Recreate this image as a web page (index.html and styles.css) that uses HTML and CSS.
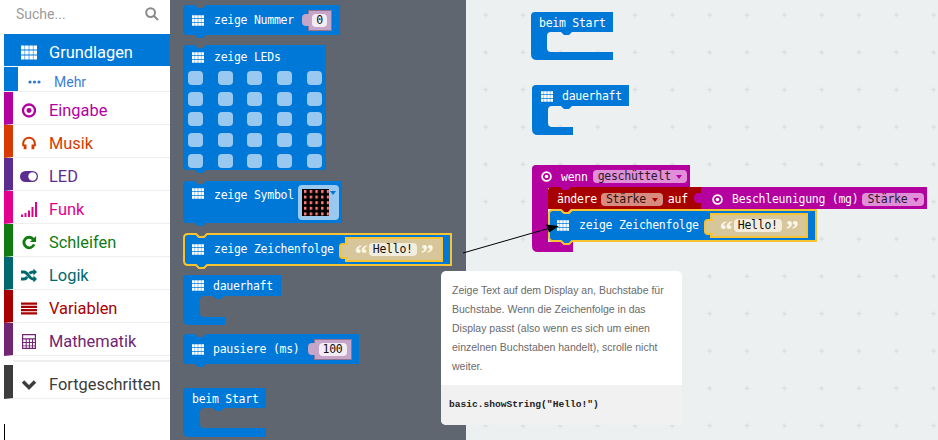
FILE: index.html
```html
<!DOCTYPE html>
<html lang="de">
<head>
    <meta charset="UTF-8">
    <title>MakeCode Editor</title>
    <link rel="stylesheet" href="styles.css">
</head>
<body>
    <svg class="sprite">
        <symbol id="grid" viewBox="0 0 16 14">
            <path d="M0 0h3.600v3.900H0zM4.100 0h3.600v3.900H4.100zM8.300 0h3.600v3.900H8.300zM12.400 0H16v3.900h-3.600zM0 5.050h3.600v3.900H0zM4.100 5.050h3.600v3.900H4.100zM8.300 5.050h3.600v3.900H8.300zM12.400 5.050H16v3.900h-3.600zM0 10.100h3.600V14H0zM4.100 10.100h3.600V14H4.100zM8.300 10.100h3.600V14H8.300zM12.400 10.100H16V14h-3.600z"/>
        </symbol>
        <symbol id="ring" viewBox="0 0 14 14">
            <circle cx="7" cy="7" r="5.6" fill="none" stroke="currentColor" stroke-width="2.2"/>
            <circle cx="7" cy="7" r="2.3"/>
        </symbol>
        <pattern id="plus" width="37.33" height="37.33" patternUnits="userSpaceOnUse">
            <path d="M17.200 15h5M19.700 12.500v5" stroke="#d4d9dc" stroke-width="1"/>
        </pattern>
        <pattern id="leds" x="2" y="1" width="5.700" height="5.600" patternUnits="userSpaceOnUse">
            <rect width="2.400" height="3" fill="#ff7a7a"/>
        </pattern>
    </svg>

    <div class="app">
        <!-- Toolbox -->
        <aside class="sidebar">
            <div class="search">
                <span>Suche...</span>
                <svg class="search-icon" viewBox="0 0 14 14"><circle cx="5.600" cy="5.600" r="4.400"/><path d="M9 9l4 4"/></svg>
            </div>
            <div class="cat cat-basic">
                <svg class="cat-icon"><use href="#grid"/></svg>
                <span>Grundlagen</span>
            </div>
            <div class="cat-more">
                <svg class="more-icon" viewBox="0 0 13 4"><circle cx="2" cy="2" r="1.600"/><circle cx="6.500" cy="2" r="1.600"/><circle cx="11" cy="2" r="1.600"/></svg>
                <span>Mehr</span>
            </div>
            <div class="cat cat-input">
                <svg class="cat-icon" viewBox="0 0 16 16"><use href="#ring" width="16" height="16"/></svg>
                <span>Eingabe</span>
            </div>
            <div class="cat cat-music">
                <svg class="cat-icon line" viewBox="0 0 16 16"><path d="M1.800 11V8a6.200 6.200 0 0 1 12.400 0v3"/><path class="fat" d="M3.800 9v5M12.200 9v5"/></svg>
                <span>Musik</span>
            </div>
            <div class="cat cat-led">
                <svg class="cat-icon icon-pill" viewBox="0 0 18 12"><rect y="0.500" width="18" height="11" rx="5.500"/><circle cx="12.500" cy="6" r="4.200" fill="#fff"/></svg>
                <span>LED</span>
            </div>
            <div class="cat cat-radio">
                <svg class="cat-icon" viewBox="0 0 16 15"><path d="M0 12.500h2V15H0zM3.500 11h2v4h-2zM7 8.500h2V15H7zM10.500 5h2v10h-2zM14 0h2v15h-2z"/></svg>
                <span>Funk</span>
            </div>
            <div class="cat cat-loops">
                <svg class="cat-icon line" viewBox="0 0 16 16"><path class="fat" d="M12.600 4.600a5.600 5.600 0 1 0 .8 5.400"/><path d="M15.500 1v6.500H9z" class="solid"/></svg>
                <span>Schleifen</span>
            </div>
            <div class="cat cat-logic">
                <svg class="cat-icon line" viewBox="0 0 16 14"><path class="fat" d="M0 3.500h3c4 0 5 7 9 7h1M0 10.500h3c1.500 0 2.400-1 3.200-2.200M8.500 5c.9-.9 2-1.500 3.500-1.500h1"/><path class="solid" d="M12.500 0L16 3.500 12.500 7zM12.500 7L16 10.500 12.500 14z"/></svg>
                <span>Logik</span>
            </div>
            <div class="cat cat-var">
                <svg class="cat-icon" viewBox="0 0 16 12"><path d="M0 0h16v2.300H0zM0 3.200h16v2.300H0zM0 6.500h16v2.300H0zM0 9.700h16V12H0z"/></svg>
                <span>Variablen</span>
            </div>
            <div class="cat cat-math">
                <svg class="cat-icon" viewBox="0 0 14 15"><path fill-rule="evenodd" d="M0 0h14v15H0zM1.200 1.200v3h11.600v-3zM1.200 5.500V8h2.500V5.500zM4.700 5.500V8h2.200V5.500zM7.900 5.500V8h2.100V5.500zM11 5.500V8h1.800V5.500zM1.200 9v2.400h2.500V9zM4.700 9v2.400h2.200V9zM7.900 9v2.400h2.100V9zM11 9v2.400h1.800V9zM1.200 12.300v1.500h2.500v-1.500zM4.700 12.300v1.500h2.200v-1.500zM7.900 12.300v1.500h2.100v-1.500zM11 12.300v1.500h1.800v-1.500z"/></svg>
                <span>Mathematik</span>
            </div>
            <div class="cat-gap"></div>
            <div class="cat cat-adv">
                <svg class="cat-icon line" viewBox="0 0 16 12"><path class="chevron" d="M2 3l6 6 6-6"/></svg>
                <span>Fortgeschritten</span>
            </div>
            <div class="caret"></div>
        </aside>

        <!-- Block flyout -->
        <section class="flyout">
            <div class="block nummer">
                <svg class="shape"><path d="M0 4Q0 0 4 0H12l3 3h5l3-3H157V30H23l-3 3h-5l-3-3H4Q0 30 0 26Z"/></svg>
                <div class="row">
                    <svg class="grid-icon"><use href="#grid"/></svg>
                    <span>zeige Nummer</span>
                    <span class="slot slot-num"><span class="field">0</span></span>
                </div>
            </div>

            <div class="block leds">
                <svg class="shape"><path d="M0 4Q0 0 4 0H12l3 3h5l3-3H143V125H23l-3 3h-5l-3-3H4Q0 125 0 121Z"/></svg>
                <div class="row">
                    <svg class="grid-icon"><use href="#grid"/></svg>
                    <span>zeige LEDs</span>
                </div>
                <div class="led-grid">
                    <i></i><i></i><i></i><i></i><i></i>
                    <i></i><i></i><i></i><i></i><i></i>
                    <i></i><i></i><i></i><i></i><i></i>
                    <i></i><i></i><i></i><i></i><i></i>
                    <i></i><i></i><i></i><i></i><i></i>
                </div>
            </div>

            <div class="block symbol">
                <svg class="shape"><path d="M0 4Q0 0 4 0H12l3 3h5l3-3H159V42H23l-3 3h-5l-3-3H4Q0 42 0 38Z"/></svg>
                <div class="row">
                    <svg class="grid-icon"><use href="#grid"/></svg>
                    <span>zeige Symbol</span>
                    <span class="picker">
                        <svg class="matrix"><rect width="27" height="27" fill="#000"/><rect width="27" height="27" fill="url(#leds)"/></svg>
                        <i class="arrow arrow-blue"></i>
                    </span>
                </div>
            </div>

            <div class="block text-block text-flyout">
                <svg class="shape selected"><path d="M0 4Q0 0 4 0H12l3 3h5l3-3H267V31H23l-3 3h-5l-3-3H4Q0 31 0 27Z"/></svg>
                <div class="row">
                    <svg class="grid-icon"><use href="#grid"/></svg>
                    <span>zeige Zeichenfolge</span>
                    <span class="slot slot-str"><b class="quote">“</b><span class="field">Hello!</span><b class="quote">”</b></span>
                </div>
            </div>

            <div class="block forever forever-flyout">
                <svg class="shape"><path d="M0 4Q0 0 4 0H98V21H41l-3 3h-5l-3-3H21Q17 21 17 25V38Q17 42 21 42H42V50H6Q0 50 0 44Z"/></svg>
                <div class="row">
                    <svg class="grid-icon"><use href="#grid"/></svg>
                    <span>dauerhaft</span>
                </div>
            </div>

            <div class="block pause">
                <svg class="shape"><path d="M0 4Q0 0 4 0H12l3 3h5l3-3H176V30H23l-3 3h-5l-3-3H4Q0 30 0 26Z"/></svg>
                <div class="row">
                    <svg class="grid-icon"><use href="#grid"/></svg>
                    <span>pausiere (ms)</span>
                    <span class="slot slot-pause"><span class="field">100</span></span>
                </div>
            </div>

            <div class="block start start-flyout">
                <svg class="shape"><path d="M0 4Q0 0 4 0H83V20H41l-3 3h-5l-3-3H21Q17 20 17 24V36Q17 40 21 40H83V49H6Q0 49 0 43Z"/></svg>
                <div class="row"><span>beim Start</span></div>
            </div>
        </section>

        <!-- Workspace -->
        <section class="workspace">
            <svg class="grid-bg"><rect width="100%" height="100%" fill="url(#plus)"/></svg>

            <div class="block start start-ws">
                <svg class="shape"><path d="M0 4Q0 0 4 0H82V20H41l-3 3h-5l-3-3H20Q16 20 16 24V36Q16 40 20 40H82V48H6Q0 48 0 42Z"/></svg>
                <div class="row"><span>beim Start</span></div>
            </div>

            <div class="block forever forever-ws">
                <svg class="shape"><path d="M0 4Q0 0 4 0H97V21H40l-3 3h-5l-3-3H20Q16 21 16 25V38Q16 42 20 42H41V50H6Q0 50 0 44Z"/></svg>
                <div class="row">
                    <svg class="grid-icon"><use href="#grid"/></svg>
                    <span>dauerhaft</span>
                </div>
            </div>

            <div class="block shake">
                <svg class="shape purple"><path d="M0 4Q0 0 4 0H158V23H39l-3 3h-5l-3-3H16V77H41V87H6Q0 87 0 81Z"/></svg>
                <div class="row">
                    <svg class="ring-icon"><use href="#ring"/></svg>
                    <span>wenn</span>
                    <span class="dd dd-purple">geschüttelt</span>
                </div>
            </div>

            <div class="block setvar">
                <svg class="shape red"><path d="M0 4Q0 0 4 0H12l3 3h5l3-3H153V22H23l-3 3h-5l-3-3H0Z"/></svg>
                <div class="row">
                    <span>ändere</span>
                    <span class="dd dd-red">Stärke</span>
                    <span>auf</span>
                </div>
            </div>

            <div class="block accel">
                <svg class="shape purple"><path d="M0 0H226V22H0V16H-3Q-7 16-7 11Q-7 6-3 6H0Z"/></svg>
                <div class="row">
                    <svg class="ring-icon"><use href="#ring"/></svg>
                    <span>Beschleunigung (mg)</span>
                    <span class="dd dd-purple">Stärke</span>
                </div>
            </div>

            <div class="block text-block text-ws">
                <svg class="shape selected"><path d="M0 4Q0 0 4 0H12l3 3h5l3-3H267V31H23l-3 3h-5l-3-3H4Q0 31 0 27Z"/></svg>
                <div class="row">
                    <svg class="grid-icon"><use href="#grid"/></svg>
                    <span>zeige Zeichenfolge</span>
                    <span class="slot slot-str"><b class="quote">“</b><span class="field">Hello!</span><b class="quote">”</b></span>
                </div>
            </div>
        </section>

        <!-- Tooltip and pointer arrow -->
        <div class="tooltip">
            <p>Zeige Text auf dem Display an, Buchstabe für Buchstabe. Wenn die Zeichenfolge in das Display passt (also wenn es sich um einen einzelnen Buchstaben handelt), scrolle nicht weiter.</p>
            <code>basic.showString("Hello!")</code>
        </div>
        <svg class="pointer" viewBox="0 0 938 440">
            <path d="M463 253L550 228" stroke="#000" stroke-width="1"/>
            <path d="M559 226L546 224.500 549 232.500Z"/>
        </svg>
    </div>
</body>
</html>
```

FILE: styles.css
```css
* {
    box-sizing: border-box;
}

body {
    margin: 0;
    font-family: Roboto, sans-serif;
    background-color: #fff;
}

.sprite {
    position: absolute;
    width: 0;
    height: 0;
}

.app {
    position: relative;
    display: flex;
    width: 938px;
    height: 440px;
    overflow: hidden;
}

/* Toolbox */
.sidebar {
    position: relative;
    width: 170px;
    flex: none;
    background-color: #fff;
}

.search {
    display: flex;
    align-items: center;
    justify-content: space-between;
    height: 34px;
    padding: 0 11px 6px 16px;
    font-size: 14px;
    color: #9b9b9b;
}

.search-icon {
    width: 14px;
    height: 14px;
    fill: none;
    stroke: #8a8a8a;
    stroke-width: 2;
}

.cat {
    display: flex;
    align-items: center;
    height: 33px;
    margin-left: 4px;
    padding: 5px 0 0 8px;
    font-size: 16.4px;
    color: var(--cat);
    fill: var(--cat);
    stroke: none;
    border-left: 9px solid var(--cat);
    border-bottom: 1px solid #eeeeee;
}

.cat-icon {
    width: 16px;
    height: 15px;
    margin-right: 12px;
    flex: none;
}

.cat-icon.line {
    fill: none;
    stroke: var(--cat);
    stroke-width: 2.2;
}

.cat-icon .fat {
    stroke-width: 3;
}

.cat-icon .solid {
    fill: var(--cat);
    stroke: none;
}

.cat-icon .chevron {
    stroke-width: 3.4;
}

.icon-pill {
    width: 18px;
    margin: 0 11px 0 -1px;
}

.cat-basic {
    --cat: #0078d7;
    height: 32px;
    padding-top: 4px;
    color: #fff;
    fill: #fff;
    background-color: #0078d7;
    border-bottom: 0;
}

.cat-more {
    display: flex;
    align-items: center;
    height: 26px;
    margin-left: 4px;
    padding: 5px 0 0 10px;
    font-size: 14px;
    color: #3a80d8;
    fill: #2f78d0;
    background: linear-gradient(#0078d7, #0078d7) left / 14px 100% no-repeat;
    border-top: 1px solid #fff;
    border-bottom: 1px solid #eeeeee;
}

.more-icon {
    width: 13px;
    height: 4px;
    margin: 0 13px 0 14px;
}

.cat-input { --cat: #b4009e; }
.cat-music { --cat: #d83b01; }
.cat-led { --cat: #5c2d91; }
.cat-radio { --cat: #e3008c; }
.cat-loops { --cat: #107c10; }
.cat-logic { --cat: #006970; }
.cat-var { --cat: #a80000; }
.cat-math { --cat: #712672; }
.cat-adv { --cat: #3c3c3c; height: 34px; }

.cat-gap {
    height: 9px;
    margin-left: 13px;
    background: linear-gradient(#eeeeee, #eeeeee) 0 4px / 100% 2px no-repeat;
}

.caret {
    position: absolute;
    left: 4px;
    top: 424px;
    width: 1px;
    height: 16px;
    background-color: #000;
}

/* Block areas */
.flyout {
    position: relative;
    width: 296px;
    flex: none;
    background-color: #5f6670;
}

.workspace {
    position: relative;
    flex: 1;
    background-color: #ecf0f1;
}

.grid-bg {
    position: absolute;
    left: 0;
    top: 0;
    width: 100%;
    height: 100%;
}

/* Blocks sit on a free canvas */
.block {
    position: absolute;
    font: 11.5px "DejaVu Sans Mono", monospace;
    letter-spacing: -0.27px;
    color: #fff;
}

.shape {
    position: absolute;
    left: 0;
    top: 0;
    width: 100%;
    height: 100%;
    overflow: visible;
    fill: #0078d7;
}

.shape.purple { fill: #b4009e; }
.shape.red { fill: #a80000; }

.shape.selected {
    stroke: #f7c331;
    stroke-width: 2;
}

.row {
    position: relative;
    display: flex;
    align-items: center;
    height: 30px;
    padding-left: 9px;
    white-space: nowrap;
}

.grid-icon {
    width: 12px;
    height: 11px;
    margin-right: 10px;
    fill: #fff;
    flex: none;
}

.ring-icon {
    width: 11px;
    height: 11px;
    margin-right: 9px;
    fill: #fff;
    color: #fff;
    flex: none;
}

.nummer { left: 13px; top: 5px; width: 157px; height: 30px; }
.leds { left: 13px; top: 45px; width: 143px; height: 125px; }
.symbol { left: 13px; top: 181px; width: 159px; height: 42px; }
.text-flyout { left: 14px; top: 234px; width: 267px; height: 31px; }
.forever-flyout { left: 13px; top: 275px; width: 98px; height: 50px; }
.pause { left: 13px; top: 334px; width: 176px; height: 30px; }
.start-flyout { left: 13px; top: 388px; width: 83px; height: 49px; }

.start-ws { left: 65px; top: 12px; width: 82px; height: 48px; }
.forever-ws { left: 66px; top: 85px; width: 97px; height: 50px; }
.shake { left: 66px; top: 165px; width: 158px; height: 87px; }
.setvar { left: 82px; top: 187px; width: 153px; height: 22px; }
.accel { left: 235px; top: 187px; width: 226px; height: 22px; }
.text-ws { left: 83px; top: 210px; width: 267px; height: 31px; }

.text-block .row {
    padding-left: 8px;
}

.forever .row,
.start .row {
    height: 22px;
}

.forever-flyout .row {
    height: 21px;
}

.forever .grid-icon,
.pause .grid-icon {
    margin-right: 9px;
}

.start-ws .row {
    padding-left: 8px;
}

.leds .row {
    height: 24px;
}

.symbol .row {
    align-items: flex-start;
    height: 42px;
    padding-top: 4px;
}

.symbol .row > span:not(.picker),
.symbol .grid-icon {
    margin-top: 3px;
}

.shake .row {
    height: 23px;
}

.setvar .row,
.accel .row {
    height: 24px;
}

.accel .row {
    padding-left: 11px;
}

.setvar .dd {
    margin: 0 5px 0 4px;
}

.accel .dd {
    margin-left: 4px;
}

.led-grid {
    position: relative;
    display: grid;
    grid-template-columns: repeat(5, 15px);
    grid-auto-rows: 14px;
    column-gap: 14.7px;
    row-gap: 6.7px;
    padding: 2px 0 0 5px;
}

.led-grid i {
    background-color: #99c9f1;
    border-radius: 4px;
}

.picker {
    position: relative;
    display: flex;
    width: 41px;
    height: 35px;
    margin-left: 4px;
    padding: 4px;
    background-color: #99c9ef;
    border-radius: 4px;
}

.matrix {
    width: 27px;
    height: 27px;
    flex: none;
}

.arrow {
    position: absolute;
    width: 0;
    height: 0;
    border-left: 3px solid transparent;
    border-right: 3px solid transparent;
    border-top: 4px solid #0078d7;
}

.arrow-blue {
    right: 3px;
    top: 6px;
}

/* Value slots */
.slot {
    position: relative;
    display: flex;
    align-items: center;
    justify-content: center;
    color: #111;
}

.slot::before {
    content: "";
    position: absolute;
    left: -7px;
    top: 50%;
    width: 7px;
    height: 12px;
    margin-top: -6px;
    border-radius: 4px 0 0 4px;
}

.slot-num,
.slot-pause {
    height: 21px;
    background-color: #c5a6c9;
    border: 1px solid #8f7394;
}

.slot-num::before,
.slot-pause::before {
    background-color: #c5a6c9;
}

.slot-num {
    width: 24px;
    margin-left: 14px;
}

.slot-pause {
    width: 38px;
    margin-left: 14px;
}

.slot-str {
    justify-content: flex-start;
    width: 98px;
    height: 25px;
    margin-left: 11px;
    padding-left: 8px;
    background-color: #d8c69b;
    border: 2px solid #f7c331;
}

.slot-str::before {
    left: -8px;
    background-color: #d8c69b;
    border: 2px solid #f7c331;
    border-right: 0;
}

.field {
    display: block;
    height: 13px;
    padding: 0 3px;
    line-height: 13px;
    background-color: #f4ecf4;
    border-radius: 4px;
}

.slot-num .field {
    width: 15px;
    padding: 0 4px;
}

.slot-pause .field {
    width: 28px;
    padding: 0 4px;
}

.slot-str .field {
    width: 48px;
    margin: 1px 4px 0;
    padding: 0 4px;
    background-color: #f3eddd;
}

.quote {
    width: 10px;
    height: 13px;
    font: bold 26px/22px "Liberation Serif", serif;
    letter-spacing: 0;
    color: #fbf6e8;
}

/* Dropdown fields */
.dd {
    position: relative;
    height: 13px;
    line-height: 13px;
    padding: 0 17px 0 5px;
    border-radius: 4px;
    color: #2b1a2b;
}

.dd::after {
    content: "";
    position: absolute;
    right: 5px;
    top: 5px;
    border-left: 3px solid transparent;
    border-right: 3px solid transparent;
    border-top: 4px solid #b4009e;
}

.dd-purple {
    background-color: #e18fd8;
}

.shake .dd {
    margin-left: 5px;
    width: 94px;
}

.dd-red {
    color: #2d1210;
    background-color: #d98b80;
}

.dd-red::after {
    border-top-color: #a80000;
}

/* Tooltip */
.tooltip {
    position: absolute;
    left: 441px;
    top: 271px;
    width: 241px;
    height: 154px;
    background-color: #fff;
    border-radius: 5px;
    overflow: hidden;
}

.tooltip p {
    height: 114px;
    margin: 0;
    padding: 10px 14px 0 11px;
    font: 10.5px/19px "Liberation Sans", Arial, sans-serif;
    color: #6a6a6a;
}

.tooltip code {
    display: block;
    height: 40px;
    padding: 14px 0 0 8px;
    font: bold 9.6px "Liberation Mono", monospace;
    color: #222;
    background-color: #f1f1f1;
}

.pointer {
    position: absolute;
    left: 0;
    top: 0;
    width: 938px;
    height: 440px;
    pointer-events: none;
}
```
